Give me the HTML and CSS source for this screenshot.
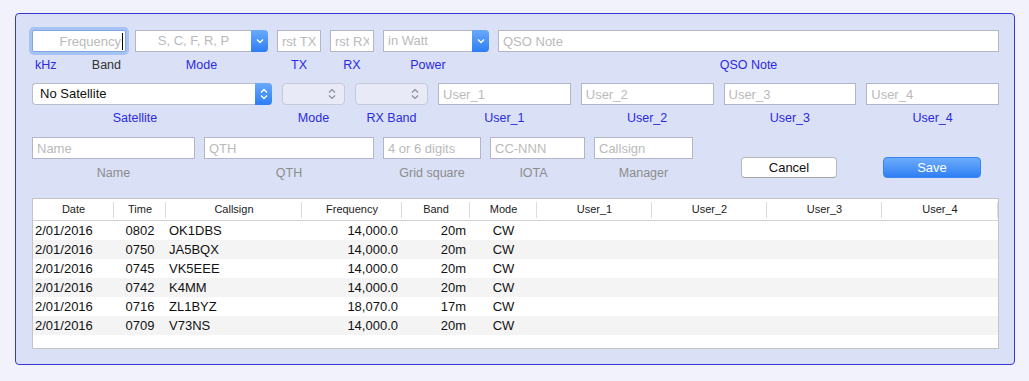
FILE: index.html
```html
<!DOCTYPE html>
<html lang="en">
<head>
    <meta charset="UTF-8">
    <title>QSO Entry</title>
    <link rel="stylesheet" href="styles.css">
</head>
<body>
    <div class="qso-panel">
        <!-- Primera fila: frecuencia, modo, reportes, potencia, nota -->
        <div class="entry-row row-one">
            <div class="group g-freq">
                <div class="field focused"><span class="ph">Frequency</span><span class="caret"></span></div>
                <div class="label split"><span class="blue">kHz</span><span class="dark">Band</span></div>
            </div>
            <div class="group g-mode">
                <div class="popup">
                    <span class="popup-text centered">S, C, F, R, P</span>
                    <span class="popup-arrow">
                        <svg width="8" height="6" viewBox="0 0 8 6"><path d="M1 1.5l3 3 3-3" fill="none" stroke="#fff" stroke-width="1.4"/></svg>
                    </span>
                </div>
                <div class="label blue">Mode</div>
            </div>
            <div class="group g-rst">
                <input class="field" type="text" placeholder="rst TX">
                <div class="label blue">TX</div>
            </div>
            <div class="group g-rst">
                <input class="field" type="text" placeholder="rst RX">
                <div class="label blue">RX</div>
            </div>
            <div class="group g-power">
                <div class="popup">
                    <span class="popup-text">in Watt</span>
                    <span class="popup-arrow">
                        <svg width="8" height="6" viewBox="0 0 8 6"><path d="M1 1.5l3 3 3-3" fill="none" stroke="#fff" stroke-width="1.4"/></svg>
                    </span>
                </div>
                <div class="label blue power-label">Power</div>
            </div>
            <div class="group g-note">
                <input class="field" type="text" placeholder="QSO Note">
                <div class="label blue">QSO Note</div>
            </div>
        </div>

        <!-- Segunda fila: satélite y campos de usuario -->
        <div class="entry-row row-two">
            <div class="group g-sat">
                <div class="stepper sat">
                    <span class="stepper-text">No Satellite</span>
                    <span class="stepper-arrow">
                        <svg width="8" height="12" viewBox="0 0 8 12"><path d="M1 4.5l3-3 3 3M1 7.5l3 3 3-3" fill="none" stroke="#fff" stroke-width="1.3"/></svg>
                    </span>
                </div>
                <div class="label blue sat-label">Satellite</div>
            </div>
            <div class="group g-smode">
                <div class="stepper disabled">
                    <span class="stepper-text"></span>
                    <span class="stepper-arrow">
                        <svg width="8" height="12" viewBox="0 0 8 12"><path d="M1 4.5l3-3 3 3M1 7.5l3 3 3-3" fill="none" stroke="#8d8f96" stroke-width="1.2"/></svg>
                    </span>
                </div>
                <div class="label blue">Mode</div>
            </div>
            <div class="group g-rxband">
                <div class="stepper disabled">
                    <span class="stepper-text"></span>
                    <span class="stepper-arrow">
                        <svg width="8" height="12" viewBox="0 0 8 12"><path d="M1 4.5l3-3 3 3M1 7.5l3 3 3-3" fill="none" stroke="#8d8f96" stroke-width="1.2"/></svg>
                    </span>
                </div>
                <div class="label blue">RX Band</div>
            </div>
            <div class="group g-user">
                <input class="field" type="text" placeholder="User_1">
                <div class="label blue">User_1</div>
            </div>
            <div class="group g-user">
                <input class="field" type="text" placeholder="User_2">
                <div class="label blue">User_2</div>
            </div>
            <div class="group g-user">
                <input class="field" type="text" placeholder="User_3">
                <div class="label blue">User_3</div>
            </div>
            <div class="group g-user">
                <input class="field" type="text" placeholder="User_4">
                <div class="label blue">User_4</div>
            </div>
        </div>

        <!-- Tercera fila: datos del corresponsal y botones -->
        <div class="entry-row row-three">
            <div class="group g-name">
                <input class="field" type="text" placeholder="Name">
                <div class="label grey">Name</div>
            </div>
            <div class="group g-qth">
                <input class="field" type="text" placeholder="QTH">
                <div class="label grey">QTH</div>
            </div>
            <div class="group g-grid">
                <input class="field" type="text" placeholder="4 or 6 digits">
                <div class="label grey">Grid square</div>
            </div>
            <div class="group g-iota">
                <input class="field" type="text" placeholder="CC-NNN">
                <div class="label grey iota-label">IOTA</div>
            </div>
            <div class="group g-mgr">
                <input class="field" type="text" placeholder="Callsign">
                <div class="label grey">Manager</div>
            </div>
            <button class="btn btn-cancel" type="button">Cancel</button>
            <button class="btn btn-save" type="button">Save</button>
        </div>

        <!-- Tabla de contactos -->
        <div class="log-table">
            <table>
                <colgroup>
                    <col class="c-date"><col class="c-time"><col class="c-call"><col class="c-freq"><col class="c-band">
                    <col class="c-mode"><col class="c-user"><col class="c-user"><col class="c-user"><col>
                </colgroup>
                <thead>
                    <tr>
                        <th>Date</th><th>Time</th><th>Callsign</th><th>Frequency</th><th>Band</th>
                        <th>Mode</th><th>User_1</th><th>User_2</th><th>User_3</th><th>User_4</th>
                    </tr>
                </thead>
                <tbody>
                    <tr><td class="t-date">2/01/2016</td><td class="t-time">0802</td><td class="t-call">OK1DBS</td><td class="t-num">14,000.0</td><td class="t-num">20m</td><td class="t-mode">CW</td><td></td><td></td><td></td><td></td></tr>
                    <tr><td class="t-date">2/01/2016</td><td class="t-time">0750</td><td class="t-call">JA5BQX</td><td class="t-num">14,000.0</td><td class="t-num">20m</td><td class="t-mode">CW</td><td></td><td></td><td></td><td></td></tr>
                    <tr><td class="t-date">2/01/2016</td><td class="t-time">0745</td><td class="t-call">VK5EEE</td><td class="t-num">14,000.0</td><td class="t-num">20m</td><td class="t-mode">CW</td><td></td><td></td><td></td><td></td></tr>
                    <tr><td class="t-date">2/01/2016</td><td class="t-time">0742</td><td class="t-call">K4MM</td><td class="t-num">14,000.0</td><td class="t-num">20m</td><td class="t-mode">CW</td><td></td><td></td><td></td><td></td></tr>
                    <tr><td class="t-date">2/01/2016</td><td class="t-time">0716</td><td class="t-call">ZL1BYZ</td><td class="t-num">18,070.0</td><td class="t-num">17m</td><td class="t-mode">CW</td><td></td><td></td><td></td><td></td></tr>
                    <tr><td class="t-date">2/01/2016</td><td class="t-time">0709</td><td class="t-call">V73NS</td><td class="t-num">14,000.0</td><td class="t-num">20m</td><td class="t-mode">CW</td><td></td><td></td><td></td><td></td></tr>
                </tbody>
            </table>
        </div>
    </div>
</body>
</html>
```

FILE: styles.css
```css
/* Estilos generales */
body {
    margin: 0;
    padding: 13px 15px;
    background-color: #f2f2fd;
    font-family: "Liberation Sans", Arial, sans-serif;
    font-size: 13px;
    color: #111;
}
.qso-panel {
    width: 1000px;
    box-sizing: border-box;
    background-color: #dae1f6;
    border: 1px solid #3838d8;
    border-radius: 4px;
    padding: 16px 15px 15px 16px;
}

/* Filas del formulario */
.entry-row {
    display: flex;
    align-items: flex-start;
}
.row-one {
    gap: 9px;
}
.row-two {
    gap: 10px;
    margin-top: 10px;
}
.row-three {
    gap: 9px;
    margin-top: 11px;
}
.group {
    display: flex;
    flex-direction: column;
}
.g-freq { width: 94px; }
.g-mode { width: 133px; }
.g-rst { width: 44px; }
.g-power { width: 106px; }
.g-note { flex: 1; }
.g-sat { width: 240px; }
.g-smode { width: 63px; }
.g-rxband { width: 73px; }
.g-user { flex: 1; }
.g-name { width: 163px; }
.g-qth { width: 170px; }
.g-grid { width: 98px; }
.g-iota { width: 95px; }
.g-mgr { width: 99px; }

/* Campos de texto */
.field {
    box-sizing: border-box;
    width: 100%;
    height: 22px;
    margin: 0;
    padding: 0 4px;
    border: 1px solid #b2b6c6;
    background-color: #fff;
    font-family: "Liberation Sans", Arial, sans-serif;
    font-size: 13px;
    color: #111;
    outline: none;
}
.field::placeholder {
    color: #bababa;
}
.field.focused {
    display: flex;
    align-items: center;
    justify-content: flex-end;
    padding-right: 2px;
    border-color: #7fa6e8;
    border-radius: 2px;
    box-shadow: 0 0 0 3px #a6c3f3;
}
.field .ph {
    color: #bababa;
}
.field .caret {
    width: 1px;
    height: 17px;
    margin-left: 1px;
    background-color: #000;
}

/* Etiquetas */
.label {
    margin-top: 6px;
    line-height: 15px;
    font-size: 12.5px;
    text-align: center;
    white-space: nowrap;
}
.label.split {
    display: flex;
    justify-content: space-between;
    padding: 0 5px 0 3px;
}
.blue { color: #2a2ae4; }
.dark { color: #333; }
.grey { color: #8c8c8c; }
.power-label { padding-right: 16px; }
.sat-label { padding-right: 34px; }
.iota-label { padding-right: 8px; }
.row-three .label {
    margin-top: 7px;
}

/* Menús desplegables */
.popup {
    display: flex;
    height: 22px;
    box-sizing: border-box;
    border: 1px solid #b2b6c6;
    border-right: none;
    border-radius: 0 4px 4px 0;
    background-color: #fff;
}
.popup-text {
    flex: 1;
    line-height: 20px;
    padding-left: 4px;
    color: #bababa;
}
.popup-text.centered {
    text-align: center;
    padding-left: 0;
}
.popup-arrow,
.stepper.sat .stepper-arrow {
    width: 17px;
    margin: -1px 0;
    display: flex;
    align-items: center;
    justify-content: center;
    border-radius: 0 4px 4px 0;
    background: linear-gradient(#69aafa, #2d7df4);
}
.stepper {
    display: flex;
    height: 22px;
    box-sizing: border-box;
    border: 1px solid #b9bccb;
    border-radius: 4px;
    background-color: #fff;
}
.stepper.sat {
    border-right: none;
}
.stepper-text {
    flex: 1;
    line-height: 20px;
    padding-left: 7px;
    color: #111;
}
.stepper.disabled {
    background-color: #e8ebf7;
    border-color: #c6c9d8;
}
.stepper.disabled .stepper-arrow {
    width: 16px;
    display: flex;
    align-items: center;
    justify-content: flex-start;
}

/* Botones */
.btn {
    margin-top: 20px;
    height: 21px;
    box-sizing: border-box;
    border-radius: 4px;
    font-family: "Liberation Sans", Arial, sans-serif;
    font-size: 13px;
    padding: 0;
    cursor: pointer;
}
.btn-cancel {
    width: 96px;
    margin-left: 39px;
    background-color: #fff;
    border: 1px solid #b8b8b8;
    border-bottom-color: #a4a4a4;
    color: #111;
}
.btn-save {
    width: 98px;
    margin-left: 37px;
    background: linear-gradient(#6dacfb, #2f7ff5);
    border: 1px solid #3a84f0;
    color: #fff;
}

/* Tabla de contactos */
.log-table {
    margin-top: 17px;
    height: 151px;
    box-sizing: border-box;
    border: 1px solid #c4c4c4;
    background-color: #fff;
    overflow: hidden;
}
.log-table table {
    width: 100%;
    border-collapse: collapse;
    table-layout: fixed;
}
.c-date { width: 81px; }
.c-time { width: 52px; }
.c-call { width: 136px; }
.c-freq { width: 100px; }
.c-band { width: 68px; }
.c-mode { width: 67px; }
.c-user { width: 115px; }
.log-table th {
    height: 21px;
    padding: 0;
    font-size: 11px;
    font-weight: normal;
    color: #222;
    line-height: 21px;
    border-bottom: 1px solid #d3d3d3;
    background: linear-gradient(#dcdcdc, #dcdcdc) right center / 1px 16px no-repeat;
}
.log-table td {
    height: 19px;
    padding: 0;
    line-height: 19px;
    white-space: nowrap;
    font-size: 13px;
}
.log-table tbody tr:nth-child(even) td {
    background-color: #f4f4f4;
}
.t-date { padding-left: 2px !important; }
.t-time,
.t-mode { text-align: center; }
.t-call { padding-left: 3px !important; }
.t-num {
    text-align: right;
    padding-right: 4px !important;
}
```
